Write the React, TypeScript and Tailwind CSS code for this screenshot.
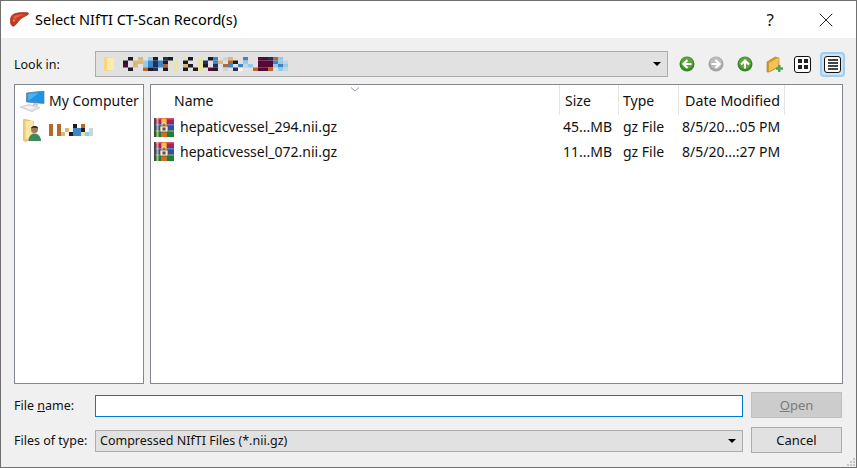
import React from 'react';
import { X } from 'lucide-react';

const font = { fontFamily: '"Noto Sans", "Open Sans", sans-serif' };

const PIXEL: Record<string, string> = {
  k: '#1c1c22',
  t: '#dcb878',
  b: '#3f86c8',
  s: '#93cbe8',
  n: '#22305f',
  y: '#e8e4a4',
  m: '#540a35',
  o: '#b9682a',
  g: '#c4d6de',
  w: '#f7f7f0',
};

// pixelated blur over the redacted text: one string per row, one letter per cell
const Smear: React.FC<{ rows: string[]; cw?: number; ch?: number }> = ({ rows, cw = 5, ch = 4 }) => (
  <svg width={rows[0].length * cw} height={rows.length * ch} className="block">
    {rows.map((row, y) =>
      row.split('').map((c, x) =>
        PIXEL[c] ? <rect key={`${x}-${y}`} x={x * cw} y={y * ch} width={cw} height={ch} fill={PIXEL[c]} /> : null,
      ),
    )}
  </svg>
);

const LiverIcon = () => (
  <svg width="19" height="15" viewBox="0 0 19 15">
    <path d="M.7 11.500C-.3 7 1 3 4.500 1.800 8 .600 14 .4 17.800.8c1 .2 1 1.200.2 1.800C15 4.500 12 5.500 9.500 8c-2 2-3.500 5-5.500 6-1.500.7-2.800-.8-3.300-2.500z" fill="#c83a24" stroke="#8e2a1c" strokeWidth="0.7" />
    <path d="M3 4.500C6 2.500 11 2.200 15 2.200 11 3.500 7 5 5 7.500 4 6.500 3.500 5.500 3 4.500z" fill="#e2603c" />
    <circle cx="4" cy="8.500" r="1.100" fill="#e8a33a" />
  </svg>
);

const RarIcon = () => (
  <svg width="20" height="19" viewBox="0 0 20 19" className="shrink-0">
    <rect x="0" y="0" width="20" height="6" fill="#b01e5a" />
    <rect x="0" y="0" width="20" height="1.500" fill="#d94f80" />
    <rect x="0" y="6" width="20" height="6.500" fill="#2c4fb0" />
    <rect x="0" y="6" width="20" height="1.500" fill="#5f7fd8" />
    <rect x="0" y="12.500" width="20" height="6.500" fill="#1f7d3c" />
    <rect x="0" y="12.500" width="20" height="1.500" fill="#4aa862" />
    <rect x="0" y="0" width="1.500" height="19" fill="#444" />
    <rect x="2.500" y="0" width="2" height="19" fill="#e7d58a" opacity="0.75" />
    <rect x="7" y="0" width="6" height="19" fill="#cf6d20" />
    <rect x="7.500" y="0.500" width="5" height="5" rx="1.500" fill="#f5bb3f" />
    <path d="M8 8V6.500a2 2 0 0 1 4 0V8" fill="none" stroke="#f1ead8" strokeWidth="1" />
    <rect x="6" y="8" width="8" height="6" rx="0.800" fill="#f1ead8" stroke="#5a4a3a" strokeWidth="0.7" />
    <rect x="8.500" y="9.500" width="3" height="3" fill="#5e4e3e" />
  </svg>
);

const ComputerIcon = () => (
  <svg width="25" height="21" viewBox="0 0 25 21">
    <path d="M6.500 2 24 0v12.500L6.500 11z" fill="#1f93e6" stroke="#66798a" strokeWidth="0.7" />
    <path d="M7.500 3 19 1.700 8.500 10z" fill="#5cc0f5" opacity="0.7" />
    <path d="M13 12l5 .3 0 2.500-5-.3z" fill="#c3c8cc" />
    <path d="M0 16 9 13.500l11 3-8 4.200z" fill="#dfe3e6" stroke="#aeb4b9" strokeWidth="0.5" />
    <path d="M4 16 9 14.800l6 1.700-4.500 2z" fill="#f5f6f7" />
  </svg>
);

const UserFolderIcon = () => (
  <svg width="19" height="23" viewBox="0 0 19 23">
    <path d="M.5.5h2l8 2v17l-8 3-2-1z" fill="#f0cb70" stroke="#d6ad55" strokeWidth="0.6" />
    <path d="M2.500 2.500l8-1v16l-8 3z" fill="#fbe6a5" />
    <circle cx="11.500" cy="10.500" r="3.500" fill="#a87858" />
    <path d="M8 9.500c0-3 7-3.500 7 0-2-1-5-1-7 0z" fill="#2d2a28" />
    <path d="M5.500 22c0-5 3-7.500 6-7.500s6.500 2.500 6.500 7.500z" fill="#3c8a5e" />
  </svg>
);

const RoundArrow: React.FC<{ dir: 'left' | 'right' | 'up'; grey?: boolean }> = ({ dir, grey }) => {
  const rot = dir === 'left' ? 180 : dir === 'up' ? -90 : 0;
  return (
    <svg width="16" height="16" viewBox="0 0 16 16">
      <circle cx="8" cy="8" r="7.500" fill={grey ? '#a3a3a3' : '#3a8428'} />
      <circle cx="8" cy="7" r="6" fill={grey ? '#bdbdbd' : '#58a53c'} />
      <path d="M3.500 8h7.500M7.500 4l4 4-4 4" transform={`rotate(${rot} 8 8)`} fill="none" stroke="#fff" strokeWidth="2.200" />
    </svg>
  );
};

const NewFolderIcon = () => (
  <svg width="17" height="18" viewBox="0 0 17 18">
    <path d="M1 7 9 2l4 1v9L3 17H1z" fill="#d99a2b" stroke="#a97a24" strokeWidth="0.6" />
    <path d="M3 8l9-5 1 .5-1 8-9 5z" fill="#f4c15a" />
    <rect x="12" y="10" width="2.500" height="7" fill="#4ea64e" />
    <rect x="10" y="12.300" width="7" height="2.500" fill="#4ea64e" />
  </svg>
);

const ViewButton: React.FC<{ active?: boolean; children: React.ReactNode }> = ({ active, children }) => (
  <div className={`flex h-[21px] w-[21px] items-center justify-center rounded-[2px] ${active ? 'bg-[#cce4f7] ring-2 ring-[#9fcdf0]' : ''}`}>
    <div className="flex h-[17px] w-[17px] items-center justify-center rounded-[3px] border border-[#111] bg-white">{children}</div>
  </div>
);

const COLUMNS = 'grid grid-cols-[409px_59px_60px_106px_1fr]';

const files = [
  { name: 'hepaticvessel_294.nii.gz', size: '45...MB', date: '8/5/20...:05 PM' },
  { name: 'hepaticvessel_072.nii.gz', size: '11...MB', date: '8/5/20...:27 PM' },
];

const App: React.FC = () => {
  return (
    <div style={font} className="relative flex h-[468px] w-[857px] flex-col overflow-hidden border border-[#707070] bg-[#f0f0f0] text-[14px] leading-none text-[#111]">
      {/* title bar */}
      <div className="flex h-[37px] shrink-0 items-center bg-white pl-[9px] pr-[18px]">
        <LiverIcon />
        <span className="ml-[6px] text-[14.500px] text-black">Select NIfTI CT-Scan Record(s)</span>
        <span className="ml-auto text-[17px]">?</span>
        <X className="ml-[40px] h-[24px] w-[24px]" strokeWidth={0.900} />
      </div>

      <div className="flex flex-1 flex-col px-[13px]">
        {/* look in row */}
        <div className="mt-[13px] flex h-[26px] items-center">
          <span className="w-[81px] pt-[2px] text-[12.500px]">Look in:</span>
          <div className="flex h-[26px] w-[573px] items-center border border-[#adadad] bg-[#e1e1e1] pl-[7px] pr-[6px]">
            <svg width="12" height="16" viewBox="0 0 12 16"><path d="M1 1h3l7 1v12l-7 1H1z" fill="#f6d67f" /><path d="M4 2h7v12H4z" fill="#fbe9ae" /></svg>
            <div className="ml-[8px]">
              <Smear
                rows={[
                  '.k.t.sk.nk..yk.y.kb.gt..b..mmnos.',
                  'k.ttsbnbk.y.k..yn.bt.ok.s..mmmbsg',
                  'm.t.sbnbo.y.tk.yk.n.ob.bgs.mmmsbs',
                  '.k..okn.k.y.k.ky.mk.g.nw..ommo.sg',
                ]}
                cw={5}
                ch={3.500}
              />
            </div>
            <div className="ml-auto h-0 w-0 border-x-[4px] border-t-[4px] border-x-transparent border-t-black" />
          </div>
          <div className="ml-[11px] flex items-center">
            <RoundArrow dir="left" />
            <div className="ml-[13px]"><RoundArrow dir="right" grey /></div>
            <div className="ml-[13px]"><RoundArrow dir="up" /></div>
            <div className="ml-[13px]"><NewFolderIcon /></div>
            <div className="ml-[9px]">
              <ViewButton>
                <div className="grid grid-cols-2 gap-[2px]">
                  <span className="h-[4px] w-[4px] bg-[#222]" /><span className="h-[4px] w-[4px] bg-[#222]" />
                  <span className="h-[4px] w-[4px] bg-[#222]" /><span className="h-[4px] w-[4px] bg-[#222]" />
                </div>
              </ViewButton>
            </div>
            <div className="ml-[9px]">
              <ViewButton active>
                <div className="flex flex-col gap-[1px]">
                  <span className="h-[2px] w-[10px] bg-[#444]" /><span className="h-[2px] w-[10px] bg-[#444]" />
                  <span className="h-[2px] w-[10px] bg-[#444]" /><span className="h-[2px] w-[10px] bg-[#444]" />
                </div>
              </ViewButton>
            </div>
          </div>
        </div>

        {/* panels */}
        <div className="mt-[7px] flex h-[300px] gap-[6px]">
          <div className="w-[130px] shrink-0 border border-[#828790] bg-white">
            <div className="mt-[4px] flex h-[24px] items-center pl-[5px]">
              <ComputerIcon />
              <span className="ml-[4px]">My Computer</span>
            </div>
            <div className="mt-[5px] flex h-[24px] items-center pl-[8px]">
              <UserFolderIcon />
              <div className="ml-[7px]">
                <Smear
                  rows={[
                    'o.o...k.o..',
                    'o.o.t.bbk.gs',
                    'o.ot.kbbysg',
                  ]}
                  cw={4}
                  ch={4}
                />
              </div>
            </div>
          </div>
          <div className="flex-1 border border-[#828790] bg-white">
            <div className={`${COLUMNS} relative h-[30px]`}>
              <div className="border-r border-[#e5e5e5] pl-[23px] pt-[9px]">Name</div>
              <div className="border-r border-[#e5e5e5] pl-[5px] pt-[9px]">Size</div>
              <div className="border-r border-[#e5e5e5] pl-[4px] pt-[9px]">Type</div>
              <div className="border-r border-[#e5e5e5] pl-[6px] pt-[9px] text-[14.300px]">Date Modified</div>
              <div />
              <svg width="10" height="5" viewBox="0 0 10 5" className="absolute left-[199px] top-[2px]"><path d="M1 .5l4 3.500 4-3.500" fill="none" stroke="#999" /></svg>
            </div>
            {files.map(f => (
              <div key={f.name} className={`${COLUMNS} h-[24.500px] items-center`}>
                <div className="flex items-center pl-[3px]">
                  <RarIcon />
                  <span className="ml-[6px]">{f.name}</span>
                </div>
                <div className="pl-[3px]">{f.size}</div>
                <div className="pl-[4px]">gz File</div>
                <div className="pl-[3px]">{f.date}</div>
              </div>
            ))}
          </div>
        </div>

        {/* file name / type rows */}
        <div className="mt-[8px] flex gap-[8px]">
          <div className="flex w-[729px] flex-col">
            <div className="mt-[3px] flex h-[22px] items-center">
              <span className="w-[81px] pt-[1px] text-[12.500px]">File <span className="underline">n</span>ame:</span>
              <div className="h-[22px] flex-1 border border-[#0078d7] bg-white" />
            </div>
            <div className="mt-[13px] flex h-[22px] items-center">
              <span className="w-[81px] text-[12.500px]">Files of type:</span>
              <div className="flex h-[22px] flex-1 items-center border border-[#adadad] bg-[#e1e1e1] pl-[4px] pr-[6px] text-[12.500px]">
                Compressed NIfTI Files (*.nii.gz)
                <div className="ml-auto h-0 w-0 border-x-[4px] border-t-[4px] border-x-transparent border-t-black" />
              </div>
            </div>
          </div>
          <div className="flex w-[91px] flex-col gap-[9px]">
            <div className="flex h-[26px] items-center justify-center border border-[#bfbfbf] bg-[#cccccc] text-[13px] text-[#7a7a7a]">
              <span><span className="underline">O</span>pen</span>
            </div>
            <div className="flex h-[26px] items-center justify-center border border-[#adadad] bg-[#e1e1e1] text-[13px]">Cancel</div>
          </div>
        </div>
      </div>

      {/* resize grip */}
      <div className="absolute bottom-[1px] right-[1px] grid grid-cols-3 gap-[1px]">
        <span /><span /><span className="h-[2px] w-[2px] bg-[#c8c8c8]" />
        <span /><span className="h-[2px] w-[2px] bg-[#c8c8c8]" /><span className="h-[2px] w-[2px] bg-[#c8c8c8]" />
        <span className="h-[2px] w-[2px] bg-[#c8c8c8]" /><span className="h-[2px] w-[2px] bg-[#c8c8c8]" /><span className="h-[2px] w-[2px] bg-[#c8c8c8]" />
      </div>
    </div>
  );
};

export default App;
